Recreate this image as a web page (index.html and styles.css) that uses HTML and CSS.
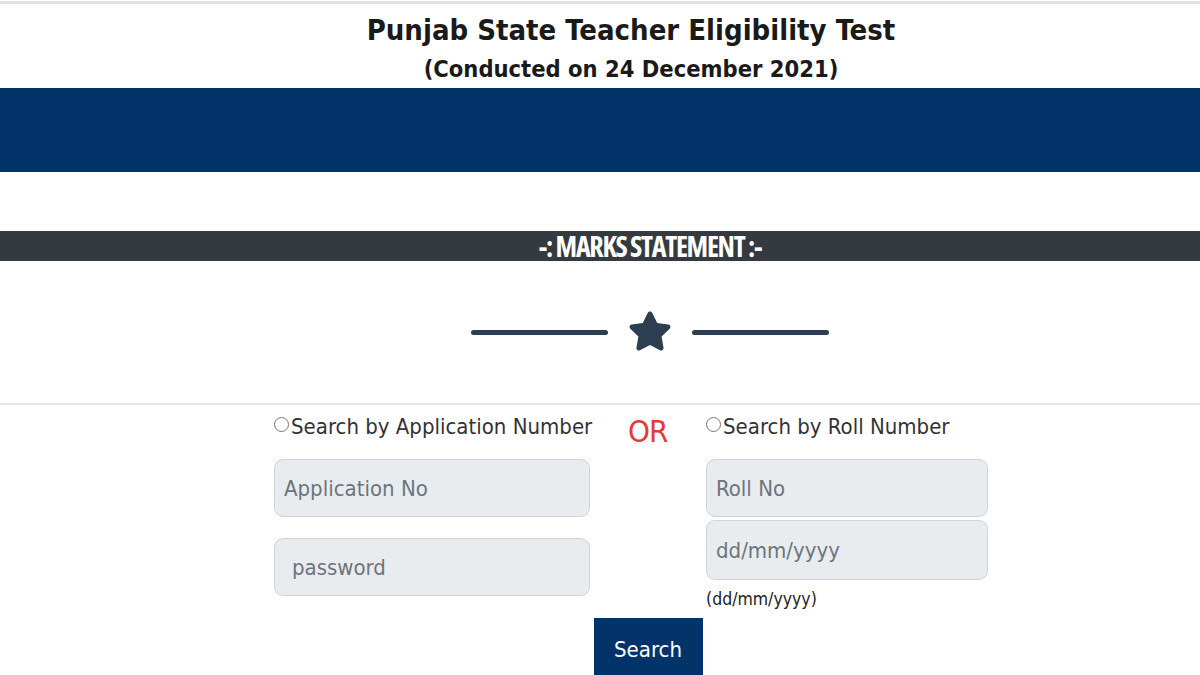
FILE: index.html
```html
<!DOCTYPE html>
<html lang="en">
<head>
<meta charset="utf-8">
<title>PSTET Marks Statement</title>
<link rel="stylesheet" href="styles.css">
</head>
<body>
<header class="head">
  <h1 class="title">Punjab State Teacher Eligibility Test</h1>
  <p class="subtitle">(Conducted on 24 December 2021)</p>
</header>
<div class="band"></div>
<div class="darkbar"><span>-: MARKS STATEMENT :-</span></div>
<div class="divider">
  <span class="line"></span>
  <svg class="star" viewBox="0 0 576 512" width="44" height="48" aria-hidden="true"><path fill="#2c3e50" d="M259.3 17.8L194 150.2 47.9 171.5c-26.2 3.8-36.7 36.1-17.7 54.6l105.7 103-25 145.5c-4.5 26.3 23.2 46 46.4 33.7L288 439.6l130.7 68.7c23.2 12.2 50.9-7.4 46.4-33.7l-25-145.5 105.7-103c19-18.5 8.5-50.8-17.7-54.6L382 150.2 316.7 17.8c-11.7-23.6-45.6-23.9-57.4 0z"/></svg>
  <span class="line"></span>
</div>
<hr class="rule">
<form class="form">
  <div class="col col-left">
    <label class="radio"><span class="dot"></span>Search by Application Number</label>
    <input class="field" type="text" placeholder="Application No">
    <input class="field field-pass" type="text" placeholder="password">
  </div>
  <div class="or">OR</div>
  <div class="col col-right">
    <label class="radio"><span class="dot"></span>Search by Roll Number</label>
    <input class="field" type="text" placeholder="Roll No">
    <input class="field field-date" type="text" placeholder="dd/mm/yyyy">
    <span class="hint">(dd/mm/yyyy)</span>
  </div>
  <button class="btn" type="button">Search</button>
</form>
</body>
</html>
```
FILE: styles.css
```css
html, body {
  margin: 0;
  padding: 0;
  background: #fff;
  overflow: hidden;
}
body {
  font-family: "DejaVu Sans Condensed", "DejaVu Sans", sans-serif;
  font-stretch: condensed;
  color: #212529;
  border-top: 3px solid #e2e2e2;
  margin-top: 1px;
}
.head {
  text-align: center;
  padding-left: 62px;
  height: 84px;
}
.title {
  margin: 0;
  padding-top: 8px;
  font-size: 29px;
  line-height: 36px;
  font-weight: bold;
  color: #1a1a1a;
}
.subtitle {
  margin: 6px 0 0;
  font-size: 23.5px;
  line-height: 30px;
  font-weight: bold;
  color: #1a1a1a;
}
.band {
  height: 84px;
  background: #023369;
}
.darkbar {
  margin-top: 59px;
  height: 30px;
  background: #343a40;
  text-align: center;
  padding-left: 100px;
  color: #fff;
  font-family: "Open Sans", sans-serif;
  font-stretch: 75%;
  font-weight: 700;
  font-size: 28px;
  line-height: 30px;
  letter-spacing: -1.3px;
}
.divider {
  height: 142px;
  display: flex;
  align-items: center;
  justify-content: center;
  padding-left: 100px;
  gap: 20px;
}
.line {
  width: 137px;
  height: 5px;
  border-radius: 3px;
  background: #2c3e50;
}
.star {
  display: block;
  margin-top: -2px;
}
.rule {
  margin: 0;
  border: 0;
  height: 2px;
  background: #e6e6e6;
}
.form {
  margin: 5px 0 0 274px;
  display: grid;
  grid-template-columns: 316px 116px 282px;
  row-gap: 8px;
}
.col {
  display: flex;
  flex-direction: column;
}
.radio {
  display: flex;
  align-items: center;
  height: 32px;
  font-size: 22px;
  color: #333;
  white-space: nowrap;
}
.dot {
  width: 13px;
  height: 13px;
  border: 1px solid #777;
  border-radius: 50%;
  margin-right: 2px;
  margin-top: -4px;
  flex: none;
}
.field {
  box-sizing: border-box;
  height: 58px;
  margin: 0;
  border: 1px solid #cfd4da;
  border-radius: 9px;
  background: #e9ecef;
  font-family: inherit;
  font-stretch: condensed;
  font-size: 22px;
  color: #495057;
  padding: 0 9px;
  outline: none;
}
.field::placeholder {
  color: #6c757d;
}
.col-left .field {
  margin-top: 17px;
}
.col-left .field-pass {
  margin-top: 21px;
  padding-left: 17px;
}
.col-right .field {
  margin-top: 17px;
}
.col-right .field-date {
  margin-top: 3px;
  height: 60px;
}
.hint {
  margin-top: 8px;
  font-size: 17.5px;
  line-height: 22px;
  color: #222;
}
.or {
  padding: 4px 0 0 38px;
  font-size: 31px;
  line-height: 34px;
  letter-spacing: -1px;
  color: #e03c3c;
}
.btn {
  grid-column: 2;
  justify-self: center;
  width: 109px;
  height: 62px;
  border: 0;
  background: #023369;
  color: #fff;
  font-family: inherit;
  font-stretch: condensed;
  font-size: 22px;
  padding: 0;
  cursor: pointer;
}
```
